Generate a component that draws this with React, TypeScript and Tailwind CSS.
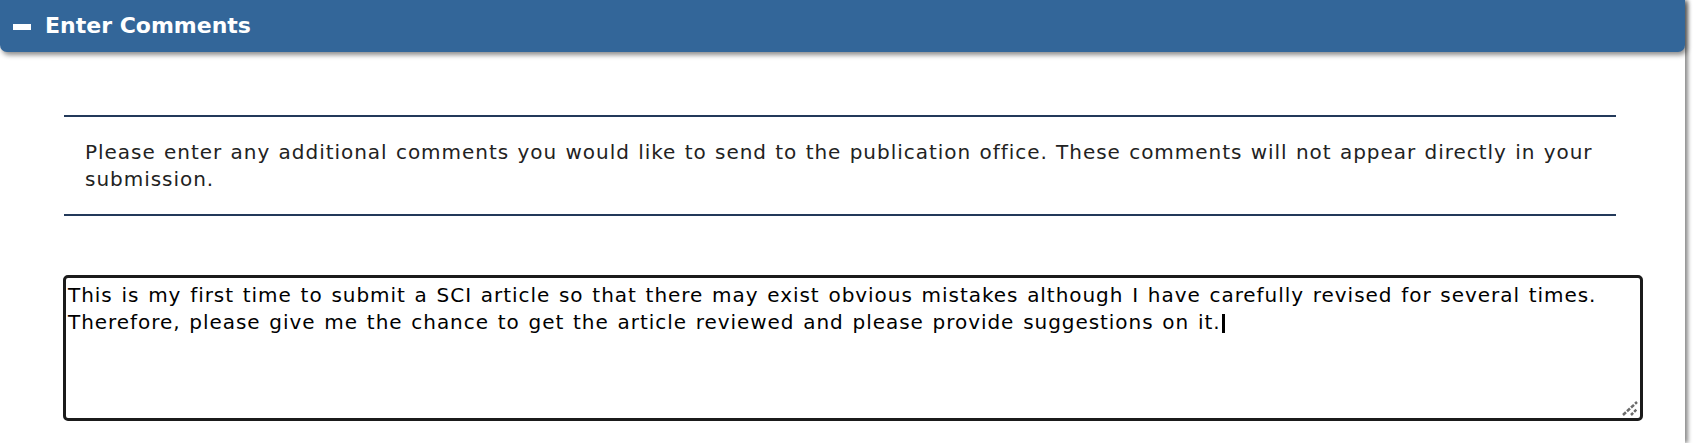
import React from "react";

export default function App() {
  return (
    <div className="w-[1696px] h-[443px] overflow-hidden bg-white" style={{ fontFamily: '"DejaVu Sans", Verdana, sans-serif' }}>
      <div className="w-[1685px] h-[443px] bg-white shadow-[3px_0_4px_rgba(0,0,0,0.45)] flex flex-col">
        <div className="h-[52px] shrink-0 bg-[#336699] rounded-b-[7px] shadow-[2px_3px_5px_rgba(0,0,0,0.45)] flex items-center pl-[13px] relative z-10">
          <span className="block w-[18px] h-[6px] bg-white mt-[2px]" />
          <h2 className="ml-[14px] text-white font-bold text-[22px] leading-none">Enter Comments</h2>
        </div>
        <div className="pl-[64px] pt-[63px]">
          <div className="w-[1552px] border-y-2 border-[#23395a] pt-[22px] pb-[21px] pl-[21px] pr-[4px]">
            <p className="text-[20px] leading-[27px] tracking-[0.97px] [word-spacing:1px] text-[#222222]">
              Please enter any additional comments you would like to send to the publication office. These comments will not appear directly in your submission.
            </p>
          </div>
          <div className="relative mt-[59px] -ml-[1px] w-[1580px] h-[146px] border-[3px] border-[#1b1b1b] rounded-[5px] pt-[4px] pl-[2px] pr-[2px] overflow-hidden text-[20px] leading-[27px] tracking-[0.95px] [word-spacing:1.5px] text-black">
            This is my first time to submit a SCI article so that there may exist obvious mistakes although I have carefully revised for several times. Therefore, please give me the chance to get the article reviewed and please provide suggestions on it.<span className="inline-block w-[3px] h-[19px] bg-black align-[-4px] ml-[1px]" />
            <svg className="absolute right-[2px] bottom-[2px]" width="16" height="16" viewBox="0 0 16 16">
              <line x1="1" y1="15" x2="15" y2="2" stroke="#6b6b6b" strokeWidth="2.5" strokeDasharray="4 1.5" />
              <line x1="9" y1="15" x2="15" y2="9" stroke="#6b6b6b" strokeWidth="2.5" strokeDasharray="3 1.5" />
            </svg>
          </div>
        </div>
      </div>
    </div>
  );
}
